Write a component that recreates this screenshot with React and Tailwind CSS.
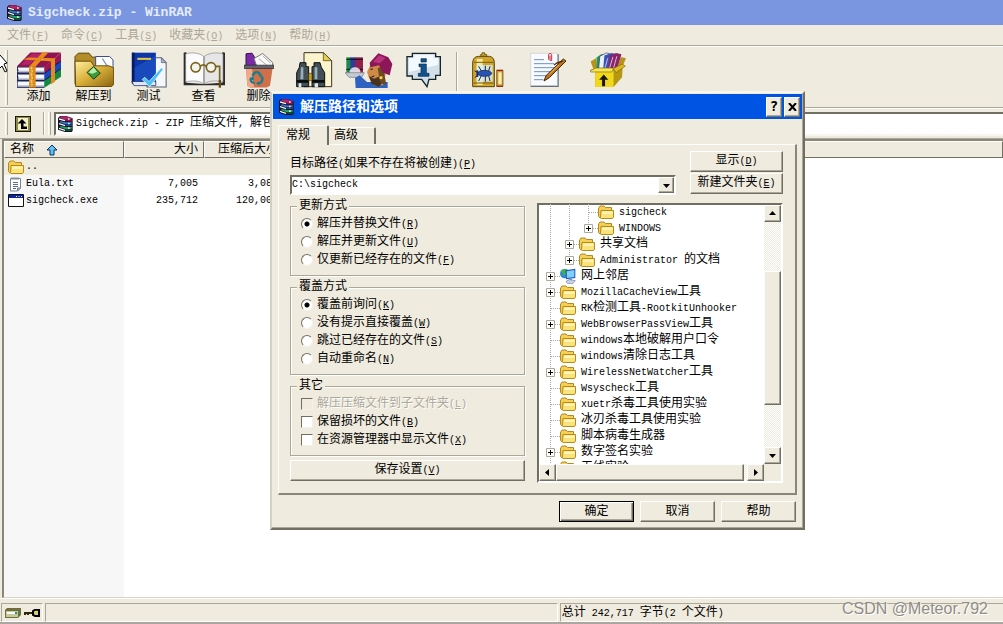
import React from 'react';

const menus = [
    { text: '文件', accel: 'F' },
    { text: '命令', accel: 'C' },
    { text: '工具', accel: 'S' },
    { text: '收藏夹', accel: 'O' },
    { text: '选项', accel: 'N' },
    { text: '帮助', accel: 'H' },
];

const files = [
    { name: '..', icon: 'folder', size: '', packed: '' },
    { name: 'Eula.txt', icon: 'text', size: '7,005', packed: '3,081' },
    { name: 'sigcheck.exe', icon: 'exe', size: '235,712', packed: '120,009' },
];

// lines: one entry per indent level (v = line through, t = branch, + = expander, e = last expander)
const tree = [
    { text: 'sigcheck', lines: ['v', 'v', 't'] },
    { text: 'WINDOWS', lines: ['v', 'v', 'e'] },
    { text: '共享文档', lines: ['v', '+'] },
    { text: 'Administrator 的文档', lines: ['v', 'e'] },
    { text: '网上邻居', lines: ['+'], icon: 'network' },
    { text: 'MozillaCacheView工具', lines: ['+'] },
    { text: 'RK检测工具-RootkitUnhooker', lines: ['t'] },
    { text: 'WebBrowserPassView工具', lines: ['+'] },
    { text: 'windows本地破解用户口令', lines: ['t'] },
    { text: 'windows清除日志工具', lines: ['t'] },
    { text: 'WirelessNetWatcher工具', lines: ['+'] },
    { text: 'Wsyscheck工具', lines: ['t'] },
    { text: 'xuetr杀毒工具使用实验', lines: ['t'] },
    { text: '冰刃杀毒工具使用实验', lines: ['t'] },
    { text: '脚本病毒生成器', lines: ['t'] },
    { text: '数字签名实验', lines: ['+'] },
    { text: '无线实验', lines: ['t'] },
];

const raised = 'border border-t-white border-l-white border-r-[#716f64] border-b-[#716f64] bg-[#efebde] shadow-[inset_-1px_-1px_0_#aca899]';

// Half-width characters take half the width of a Chinese character
function Txt({ text, accel }) {
    return (
        <span className="whitespace-pre">
            {text.split(/([\x20-\x7e]+)/).filter(Boolean).map((part, i) => (
                /^[\x20-\x7e]/.test(part)
                    ? <span key={i} className="text-[10px]">{part}</span>
                    : <span key={i}>{part}</span>
            ))}
            {accel && <span className="text-[10px]">(<u>{accel}</u>)</span>}
        </span>
    );
}

function BooksSmall() {
    return (
        <svg className="h-4 w-4 shrink-0" viewBox="0 0 48 48" aria-hidden="true">
            <path d="M3 6 L9 0 H28 L47 7 V44 L44 48 H24 L3 41 Z" fill="#1a1220" />
            <path d="M7 5 L12 1 H27 L45 7 L42 11 H24 Z" fill="#b0246c" />
            <path d="M6 7 L24 12 V16 L6 11 Z" fill="#fff" />
            <path d="M25 12 H45 V16 H25 Z" fill="#8c1450" />
            <path d="M7 19 L12 16 L26 19 H45 L43 25 H24 Z" fill="#2c78d4" />
            <path d="M6 21 L24 27 V31 L6 25 Z" fill="#fff" />
            <path d="M25 26 H45 V30 H25 Z" fill="#164c9c" />
            <path d="M7 33 L12 30 L26 33 H45 L43 39 H24 Z" fill="#20a070" />
            <path d="M6 35 L24 41 V45 L6 39 Z" fill="#fff" />
            <path d="M25 40 H44 V44 H25 Z" fill="#0c6a3c" />
            <path d="M33 7 H38 V11 H33 Z M33 20 H38 V25 H33 Z M33 34 H38 V39 H33 Z" fill="#f4e8c0" />
        </svg>
    );
}

function Folder() {
    return (
        <svg className="h-4 w-4 shrink-0" viewBox="0 0 16 16" aria-hidden="true">
            <path d="M1 3.5 L2 2 H6 L7.5 3.5 H13.5 V14 H2 L.5 12.5 V4 Z" fill="#f3cf55" stroke="#b58a1b" />
            <path d="M3 6.5 H15.5 V13 L14.5 14.5 H3.5 L2.5 13.5 Z" fill="#fbe37c" stroke="#b58a1b" />
            <path d="M4 7.5 H14.5 V10 H4 Z" fill="#fff3b4" />
        </svg>
    );
}

function Network() {
    return (
        <svg className="h-4 w-4 shrink-0" viewBox="0 0 48 48" aria-hidden="true">
            <circle cx="14" cy="17" r="14" fill="#2f86d8" />
            <path d="M3 10 C8 2 18 1 24 6 L18 12 L20 20 L12 24 L8 16 Z" fill="#3fb548" />
            <path d="M16 7 L46 2 V30 L18 34 Z" fill="#2156c4" />
            <path d="M20 10 L43 6 V27 L21 30 Z" fill="#7fd0fb" />
            <path d="M26 34 L36 32 V38 H26 Z" fill="#8e96b8" />
            <path d="M18 40 L28 35 L46 38 L38 47 L22 46 Z" fill="#cdd3e6" stroke="#7480a8" strokeWidth="2" />
        </svg>
    );
}

function FileIcon({ type }) {
    if (type === 'folder') return <Folder />;
    if (type === 'text') {
        return (
            <svg className="h-4 w-4 shrink-0" viewBox="0 0 16 16" aria-hidden="true">
                <path d="M2.5 2.5 H12.5 V12 L9.5 15 H2.5 Z" fill="#fff" stroke="#7d8494" />
                <path d="M4 1 V4 M6 1 V4 M8 1 V4 M10 1 V4" stroke="#8a93a8" />
                <path d="M5 6.5 H10 M5 8.5 H10 M5 10.5 H10 M5 12.5 H8" stroke="#5a6a94" />
                <path d="M9.5 15 V12 H12.5 Z" fill="#bcc4d6" stroke="#7d8494" />
            </svg>
        );
    }
    return (
        <svg className="h-4 w-4 shrink-0" viewBox="0 0 16 16" aria-hidden="true">
            <path d="M.5 1.5 H15.5 V13.5 H.5 Z" fill="#fff" stroke="#111" />
            <path d="M1 2 H15 V5 H1 Z" fill="#0a22a8" />
            <path d="M8 3.5 H9 M10.5 3.5 H11.5 M13 3.5 H14" stroke="#fff" />
        </svg>
    );
}

function AddIcon() {
    return (
        <svg className="h-9 w-11" viewBox="48 158 132 107" aria-hidden="true">
            <path d="M48 200 H130 V265 H48 Z" fill="#1b2350" />
            <path d="M48 200 L88 159 H180 L132 202 H48 Z" fill="#8f1450" />
            <path d="M60 196 L92 163 H120 L85 196 Z" fill="#b52468" />
            <path d="M50 204 H130 V218 H54 Z M50 225 H130 V240 H54 Z M50 246 H130 V261 H50 Z" fill="#f6f7fb" />
            <path d="M50 214 H130 V218 H50 Z M50 236 H130 V240 H50 Z M50 257 H130 V261 H50 Z" fill="#b4bcd2" />
            <path d="M130 202 L180 160 V184 L130 222 Z" fill="#9c1656" />
            <path d="M130 222 L180 184 V207 L130 243 Z" fill="#1a48c4" />
            <path d="M130 243 L180 207 V232 L130 265 Z" fill="#128a44" />
            <path d="M130 222 L180 184 M130 243 L180 207" stroke="#0c1238" strokeWidth="3" />
            <path d="M124 159 H142 L104 201 H84 Z M66 180 L82 174 L164 176 L158 186 Z" fill="#e88a1c" />
            <path d="M84 200 H104 V264 H84 Z M150 186 L162 176 V247 L150 254 Z" fill="#e48a1e" />
            <path d="M89 202 H94 V262 H89 Z" fill="#ffc660" />
            <path d="M90 211 h7 v7 h-7 Z M90 232 h7 v7 h-7 Z M90 252 h7 v7 h-7 Z M120 177 h8 v5 h-8 Z" fill="#ffe34a" stroke="#7a4204" />
        </svg>
    );
}

function ExtractIcon() {
    return (
        <svg className="h-9 w-10" viewBox="225 160 120 105" aria-hidden="true">
            <defs>
                <linearGradient id="gold" x1="0" y1="0" x2="1" y2="1">
                    <stop offset="0" stopColor="#fff0a0" />
                    <stop offset=".5" stopColor="#d8ae38" />
                    <stop offset="1" stopColor="#8a6410" />
                </linearGradient>
            </defs>
            <path d="M228 172 L238 162 H270 L280 174 H300 V255 H228 Z" fill="#b48c28" stroke="#5c430a" strokeWidth="3" />
            <path d="M290 172 H332 L342 182 V225 H290 Z" fill="#fff" stroke="#38508c" strokeWidth="3" />
            <path d="M310 178 L328 206 H318 V220" fill="none" stroke="#7b94c8" strokeWidth="4" />
            <path d="M228 186 H275 L285 200 H330 L344 206 V256 L338 262 H230 Z" fill="url(#gold)" stroke="#6b4d0c" strokeWidth="3" />
            <path d="M284 202 L304 222 L284 240 L264 220 Z" fill="#3f9b3c" stroke="#143c12" strokeWidth="3" />
            <path d="M284 204 L294 218 L280 224 L268 220 Z" fill="#b7efaa" />
        </svg>
    );
}

function TestIcon() {
    return (
        <svg className="h-9 w-9" viewBox="394 160 104 105" aria-hidden="true">
            <path d="M440 177 H482 L496 191 V262 H440 Z" fill="#f4f6fb" stroke="#5b6172" strokeWidth="3" />
            <path d="M482 177 V191 H496 Z" fill="#aab4cc" stroke="#5b6172" strokeWidth="2" />
            <path d="M396 162 H466 V252 H396 Z" fill="#0c36a8" />
            <path d="M396 162 H404 V252 H396 Z" fill="#041c64" />
            <path d="M404 206 L466 170 V252 H404 Z" fill="#2258cc" opacity=".6" />
            <path d="M396 246 H466 V258 H402 Z" fill="#dfe6f4" stroke="#041c64" strokeWidth="2" />
            <path d="M412 180 H452" stroke="#e8c63c" strokeWidth="6" />
            <path d="M426 240 L434 234 L446 246 L482 206 L488 210 L448 262 Z" fill="#48c0f8" stroke="#fff" strokeWidth="2" />
        </svg>
    );
}

function ViewIcon() {
    return (
        <svg className="h-9 w-[42px]" viewBox="550 160 126 108" aria-hidden="true">
            <path d="M552 162 L560 160 V252 L612 256 L668 252 V160 L676 162 V260 H552 Z" fill="#2b2b30" />
            <path d="M558 166 C575 160 600 162 613 174 V256 C596 244 574 246 558 250 Z" fill="#fbfbfb" stroke="#888" strokeWidth="2" />
            <path d="M670 166 C652 160 626 162 613 174 V256 C630 244 652 246 670 250 Z" fill="#e6e6e6" stroke="#888" strokeWidth="2" />
            <path d="M613 174 V256" stroke="#999" strokeWidth="4" />
            <circle cx="588" cy="206" r="14" fill="#f4f4ee" stroke="#7a641c" strokeWidth="5" />
            <circle cx="634" cy="206" r="14" fill="#f4f4ee" stroke="#7a641c" strokeWidth="5" />
            <path d="M602 203 Q611 194 620 203 M648 203 H660 V250" fill="none" stroke="#7a641c" strokeWidth="5" />
            <path d="M657 244 H664 V267 H657 Z" fill="#6a4d12" />
        </svg>
    );
}

function DeleteIcon() {
    return (
        <svg className="h-9 w-[30px]" viewBox="732 160 90 105" aria-hidden="true">
            <path d="M738 164 L756 162 L782 204 H738 Z" fill="#7c2aa8" stroke="#34104c" strokeWidth="3" />
            <path d="M762 178 L788 163 L818 190 V206 H772 Z" fill="#fbfbfb" stroke="#777" strokeWidth="3" />
            <path d="M776 178 L800 198 M788 170 L812 192" stroke="#aaa" strokeWidth="3" />
            <path d="M738 206 H818 L810 260 L800 265 H750 L742 260 Z" fill="#d0704a" />
            <path d="M738 206 H756 L762 265 H750 L742 260 Z" fill="#f0a888" />
            <path d="M732 198 H822 V208 H732 Z" fill="#62636c" stroke="#26262c" strokeWidth="2" />
            <path d="M758 230 C762 216 776 216 780 226 M786 232 C790 246 782 254 774 252 M764 252 C752 250 750 242 754 236" fill="none" stroke="#157f8c" strokeWidth="7" />
            <path d="M774 226 H788 L782 236 Z M778 246 V260 L768 252 Z M748 240 L760 230 L762 244 Z" fill="#157f8c" />
        </svg>
    );
}

function FindIcon() {
    return (
        <svg className="h-9 w-[38px]" viewBox="872 158 112 108" aria-hidden="true">
            <path d="M898 160 H956 L981 184 V262 H898 Z" fill="#fcf4cc" stroke="#3a3520" strokeWidth="3" />
            <path d="M956 160 V184 H981 Z" fill="#e8cf4c" stroke="#3a3520" strokeWidth="2" />
            <path d="M886 190 H904 V202 H912 V262 H876 V220 L884 204 Z" fill="#425056" stroke="#0c1214" strokeWidth="3" />
            <path d="M928 190 H946 L950 204 L960 220 V262 H922 V202 H928 Z" fill="#425056" stroke="#0c1214" strokeWidth="3" />
            <path d="M889 204 H896 V240 H887 Z M930 204 H938 V240 H930 Z" fill="#98b0b8" />
            <path d="M876 242 H912 V250 H876 Z M922 242 H960 V250 H922 Z" fill="#0a0d0e" />
            <path d="M882 252 H890 V264 H882 Z M930 252 H940 V264 H930 Z" fill="#dfe8ea" />
            <path d="M912 222 H922 V244 H912 Z" fill="#c9a42c" stroke="#4a3a08" strokeWidth="2" />
        </svg>
    );
}

function WizardIcon() {
    return (
        <svg className="h-9 w-12" viewBox="46 22 144 108" aria-hidden="true">
            <path d="M50 38 H64 V84 H50 Z" fill="#1c8a4c" />
            <path d="M62 38 H78 V84 H62 Z" fill="#28409c" />
            <path d="M76 38 H100 V84 H76 Z" fill="#92204c" />
            <path d="M50 44 H100 M50 74 H100" stroke="#101018" strokeWidth="3" />
            <ellipse cx="76" cy="80" rx="16" ry="12" fill="#fff" opacity=".8" />
            <path d="M46 84 H104 L96 98 H58 Z" fill="#c5cad2" stroke="#70767e" strokeWidth="2" />
            <path d="M78 130 L76 100 L90 92 L112 112 H174 V130 Z" fill="#2d62c0" />
            <path d="M122 62 L154 60 L168 88 L160 122 H132 L118 100 L112 82 Z" fill="#cf8a48" />
            <path d="M118 94 L134 102 L156 92 L160 112 L148 126 L126 118 Z" fill="#48331c" />
            <path d="M144 70 L160 66 L170 120 L152 116 Z" fill="#6a4a20" />
            <path d="M120 54 L146 26 L176 38 L188 58 L180 92 L160 84 L148 62 L122 68 Z" fill="#8c1658" />
            <path d="M130 52 L148 32 L168 40 L150 56 Z" fill="#b8347c" />
            <circle cx="154" cy="99" r="5" fill="#f4d03c" />
            <path d="M122 74 L130 73 M126 96 L134 94" stroke="#2a1606" strokeWidth="3" />
        </svg>
    );
}

function InfoIcon() {
    return (
        <svg className="h-9 w-9" viewBox="230 24 106 108" aria-hidden="true">
            <path d="M248 28 H318 V38 H332 V94 H318 V106 H298 L292 128 L276 106 H248 V96 H232 V38 H248 Z" fill="#d3dfe9" stroke="#16242c" strokeWidth="4" />
            <path d="M254 33 H312 V42 H326 V62 L238 84 V42 H254 Z" fill="#f4f9fd" />
            <path d="M274 44 H290 V54 H274 Z M268 60 H290 V88 H298 V97 H266 V88 H274 V68 H268 Z" fill="#0f548c" stroke="#082a4c" strokeWidth="2" />
        </svg>
    );
}

function VirusIcon() {
    return (
        <svg className="h-9 w-8" viewBox="430 24 96 106" aria-hidden="true">
            <path d="M456 30 H460 V25 H468 V30 H474 V38 H456 Z" fill="#c8a02c" stroke="#54400a" strokeWidth="2" />
            <path d="M432 54 Q434 36 450 36 H482 Q496 38 497 54 V127 H432 Z" fill="#d0a52c" stroke="#5c450c" strokeWidth="3" />
            <path d="M444 44 H462 V122 H444 Z" fill="#fdf3b4" opacity=".85" />
            <path d="M435 54 H495 M435 116 H495" stroke="#7a5c10" strokeWidth="3" />
            <path d="M444 62 H492 V112 H444 Z" fill="#d8edf8" opacity=".8" />
            <path d="M450 66 L458 80 M470 64 L470 80 M484 66 L480 80 M450 110 L458 94 M470 112 V94 M484 110 L480 94 M438 80 L450 86 M438 100 L450 90" stroke="#182a5c" strokeWidth="3" />
            <ellipse cx="468" cy="87" rx="21" ry="9" fill="#2754b4" stroke="#101e4c" strokeWidth="2" />
            <path d="M446 78 V98" stroke="#162c74" strokeWidth="6" />
            <path d="M504 78 H523 V126 H504 Z" fill="#cf9a2c" stroke="#5c450c" strokeWidth="2" />
            <path d="M509 84 H519 V120 H509 Z" fill="#f8ecb0" />
            <path d="M504 78 H523 M504 126 H523" stroke="#a02818" strokeWidth="4" />
        </svg>
    );
}

function CommentIcon() {
    return (
        <svg className="h-9 w-9" viewBox="604 24 108 106" aria-hidden="true">
            <path d="M610 30 H690 V128 H606 Z" fill="#5c6470" />
            <path d="M606 27 H686 V124 H606 Z" fill="#f8fafd" stroke="#c4cbd6" strokeWidth="2" />
            <path d="M616 46 H646 M616 58 H676 M616 70 H676 M616 82 H670 M616 94 H660 M616 106 H644" stroke="#6c92c4" strokeWidth="3" />
            <path d="M660 46 V30 Q664 24 669 30 V48 H664 V34" fill="none" stroke="#c8283c" strokeWidth="3" />
            <path d="M704 44 L712 50 L662 100 L646 110 L652 94 Z" fill="#bd7420" stroke="#4c2a06" strokeWidth="3" />
            <path d="M676 62 L684 56 L702 50" fill="none" stroke="#4c2a06" strokeWidth="4" />
            <path d="M690 62 L662 90" stroke="#f0bc68" strokeWidth="3" />
        </svg>
    );
}

function SfxIcon() {
    return (
        <svg className="h-9 w-9" viewBox="782 22 110 108" aria-hidden="true">
            <path d="M802 38 L816 28 L824 28 L812 76 H800 Z" fill="#1f9a58" />
            <path d="M812 34 L832 24 L842 26 L824 76 H808 Z" fill="#eceef8" stroke="#335" strokeWidth="2" />
            <path d="M826 32 L848 24 L858 26 L842 76 H822 Z" fill="#3556b4" />
            <path d="M842 32 L862 24 L878 28 L866 72 H838 Z" fill="#8a2468" />
            <path d="M836 40 L828 70 M852 36 L842 70 M864 34 L854 70" stroke="#d9b8e0" strokeWidth="3" />
            <path d="M784 50 L800 40 L802 72 L792 72 Z M876 36 L892 40 L880 68 L866 66 Z" fill="#b8921c" />
            <path d="M784 74 L852 72 L882 62 L880 98 L854 128 H798 V82 Z" fill="#b59712" />
            <path d="M798 78 H854 V128 H798 Z" fill="#f2d81c" />
            <path d="M782 78 L800 70 H856 L848 82 H784 Z" fill="#f7e554" stroke="#7a6408" strokeWidth="2" />
            <path d="M852 72 L880 58 L890 64 L862 84 Z" fill="#dcba20" stroke="#7a6408" strokeWidth="2" />
            <path d="M824 90 L838 106 H828 V126 H819 V106 H810 Z" fill="#1c1604" />
        </svg>
    );
}

function ToolButton({ icon, label, title, wide }) {
    return (
        <button type="button" aria-label={title} className={`flex h-[54px] shrink-0 flex-col items-center ${wide ? 'w-[60px]' : 'w-[55px]'}`}>
            {icon}
            {label && <span className="leading-[18px]">{label}</span>}
        </button>
    );
}

function Arrow({ d }) {
    return (
        <svg className="h-[7px] w-[7px]" viewBox="0 0 7 7" aria-hidden="true">
            <path d={d} fill="#000" />
        </svg>
    );
}

function Choice({ type, name, text, accel, checked, disabled }) {
    const shape = type === 'radio'
        ? 'rounded-full checked:bg-[radial-gradient(circle,#000_2px,#fff_3px)]'
        : '';
    return (
        <label className={`flex h-[18px] items-center gap-1 ${disabled ? 'text-[#aca899] [text-shadow:1px_1px_0_#fff]' : ''}`}>
            <input
                type={type}
                name={name}
                defaultChecked={checked}
                disabled={disabled}
                className={`h-3 w-3 appearance-none border border-t-[#716f64] border-l-[#716f64] border-r-[#f4f1e8] border-b-[#f4f1e8] bg-white disabled:bg-[#efebde] ${shape}`}
            />
            <Txt text={text} accel={accel} />
        </label>
    );
}

function Group({ title, children }) {
    return (
        <fieldset className="border border-[#aca899] pt-[2px] pb-[6px] pl-[10px] shadow-[1px_1px_0_#fff,inset_1px_1px_0_#fff]">
            <legend className="-ml-1 bg-[#efebde] px-[2px] leading-[14px]">{title}</legend>
            {children}
        </fieldset>
    );
}

function Branch({ kind }) {
    const node = kind === '+' || kind === 'e';
    return (
        <svg className="h-4 w-[19px] shrink-0" viewBox="0 0 19 16" aria-hidden="true">
            <path d={kind === 'e' ? 'M9.5 0 V8' : 'M9.5 0 V16'} stroke="#aca899" strokeDasharray="1 1" />
            {kind !== 'v' && <path d="M10 8.5 H19" stroke="#aca899" strokeDasharray="1 1" />}
            {node && <path d="M5.5 4.5 H13.5 V12.5 H5.5 Z" fill="#fff" stroke="#aca899" />}
            {node && <path d="M7 8.5 H12 M9.5 6 V11" stroke="#000" />}
        </svg>
    );
}

function FolderTree() {
    const track = 'bg-[repeating-conic-gradient(#fff_0_25%,#efebde_0_50%)] bg-[length:2px_2px]';
    return (
        <div className="mt-1 grid h-[280px] flex-1 grid-cols-[minmax(0,1fr)_17px] grid-rows-[minmax(0,1fr)_17px] border-2 border-t-[#716f64] border-l-[#716f64] border-r-white border-b-white bg-white">
            <ul role="tree" className="-mt-px overflow-hidden pl-[2px]">
                {tree.map((node) => (
                    <li key={node.text} role="treeitem" className="flex h-4 items-center">
                        {node.lines.map((kind, i) => <Branch key={i} kind={kind} />)}
                        {node.icon === 'network' ? <Network /> : <Folder />}
                        <span className="pl-[5px] leading-4"><Txt text={node.text} /></span>
                    </li>
                ))}
            </ul>
            <div className={`flex flex-col ${track}`}>
                <button type="button" aria-label="向上" className={`flex h-[17px] items-center justify-center ${raised}`}>
                    <Arrow d="M0 5 L3.5 1 L7 5 Z" />
                </button>
                <div className="h-[49px]" />
                <div className={`h-[134px] ${raised}`} />
                <div className="flex-1" />
                <button type="button" aria-label="向下" className={`flex h-[17px] items-center justify-center ${raised}`}>
                    <Arrow d="M0 2 L3.5 6 L7 2 Z" />
                </button>
            </div>
            <div className={`flex ${track}`}>
                <button type="button" aria-label="向左" className={`flex w-[17px] items-center justify-center ${raised}`}>
                    <Arrow d="M5 0 L1 3.5 L5 7 Z" />
                </button>
                <div className={`mr-[3px] flex-1 ${raised}`} />
                <button type="button" aria-label="向右" className={`flex w-[17px] items-center justify-center ${raised}`}>
                    <Arrow d="M2 0 L6 3.5 L2 7 Z" />
                </button>
            </div>
            <div className="bg-[#efebde]" />
        </div>
    );
}

function ExtractDialog() {
    return (
        <div role="dialog" aria-labelledby="dlg-title" className="absolute top-[91px] left-[270px] w-[535px] border-2 border-t-[#f7f5ee] border-l-[#d4d0c2] border-r-[#716f64] border-b-[#716f64] bg-[#efebde] p-px shadow-[inset_-1px_-1px_0_#aca899]">
            <div className="flex h-[25px] items-center bg-[#0054e3] pr-[2px] pl-[5px] text-white">
                <BooksSmall />
                <h2 id="dlg-title" className="flex-1 pl-[6px] text-[14px] leading-5 font-bold">解压路径和选项</h2>
                <button type="button" aria-label="帮助" className={`flex h-5 w-4 items-center justify-center font-['DejaVu_Sans_Mono'] text-[14px] font-bold text-black ${raised}`}>?</button>
                <button type="button" aria-label="关闭" className={`ml-[2px] flex h-5 w-4 items-center justify-center ${raised}`}>
                    <svg className="h-2 w-[9px]" viewBox="0 0 9 8" aria-hidden="true">
                        <path d="M1 0 L8 8 M8 0 L1 8" stroke="#000" strokeWidth="2" />
                    </svg>
                </button>
            </div>

            <div className="px-[5px] pt-[6px] pb-[5px]">
                <div role="tablist" className="flex h-[19px] items-end">
                    <button type="button" role="tab" aria-selected="true" className="z-10 -mb-px h-5 w-[51px] rounded-t-xs border-t border-r-2 border-l border-t-white border-r-[#716f64] border-l-white bg-[#efebde] pl-[7px] text-left leading-4">常规</button>
                    <button type="button" role="tab" aria-selected="false" className="h-[17px] w-[47px] rounded-t-xs border-t border-r-2 border-t-white border-r-[#716f64] pl-[5px] text-left leading-4">高级</button>
                </div>

                <div className="border-t border-r-2 border-b-2 border-l border-t-white border-r-[#8a877a] border-b-[#8a877a] border-l-white pt-[6px] pr-3 pb-[10px] pl-[11px]">
                    <div className="flex gap-[14px]">
                        <div className="flex-1 pt-1">
                            <label htmlFor="path" className="block leading-[18px]"><Txt text="目标路径(如果不存在将被创建)" accel="P" /></label>
                            <div className="mt-px flex h-5 border-2 border-t-[#716f64] border-l-[#716f64] border-r-white border-b-white bg-white">
                                <select id="path" className="min-w-0 flex-1 appearance-none bg-white text-[10px] leading-4 outline-none">
                                    <option>C:\sigcheck</option>
                                </select>
                                <span className={`flex w-4 items-center justify-center ${raised}`}>
                                    <Arrow d="M0 2 L3.5 6 L7 2 Z" />
                                </span>
                            </div>
                        </div>
                        <div className="flex w-[93px] flex-col gap-px">
                            <button type="button" className={`h-[21px] leading-4 ${raised}`}><Txt text="显示" accel="D" /></button>
                            <button type="button" className={`h-[21px] leading-4 ${raised}`}><Txt text="新建文件夹" accel="E" /></button>
                        </div>
                    </div>

                    <div className="mt-1 flex gap-3">
                        <div className="flex w-[235px] flex-col gap-1">
                            <Group title="更新方式">
                                <Choice type="radio" name="update" text="解压并替换文件" accel="R" checked />
                                <Choice type="radio" name="update" text="解压并更新文件" accel="U" />
                                <Choice type="radio" name="update" text="仅更新已经存在的文件" accel="F" />
                            </Group>
                            <Group title="覆盖方式">
                                <Choice type="radio" name="overwrite" text="覆盖前询问" accel="K" checked />
                                <Choice type="radio" name="overwrite" text="没有提示直接覆盖" accel="W" />
                                <Choice type="radio" name="overwrite" text="跳过已经存在的文件" accel="S" />
                                <Choice type="radio" name="overwrite" text="自动重命名" accel="N" />
                            </Group>
                            <Group title="其它">
                                <Choice type="checkbox" name="subfolder" text="解压压缩文件到子文件夹" accel="L" disabled />
                                <Choice type="checkbox" name="broken" text="保留损坏的文件" accel="B" />
                                <Choice type="checkbox" name="explorer" text="在资源管理器中显示文件" accel="X" />
                            </Group>
                            <button type="button" className={`h-[21px] leading-4 ${raised}`}><Txt text="保存设置" accel="V" /></button>
                        </div>
                        <FolderTree />
                    </div>
                </div>

                <div className="mt-[6px] flex justify-end gap-[6px] pr-px">
                    <button type="button" className="h-[21px] w-[75px] border border-black leading-4 shadow-[inset_1px_1px_0_#fff,inset_-1px_-1px_0_#716f64,inset_-2px_-2px_0_#aca899]">确定</button>
                    <button type="button" className={`h-[21px] w-[75px] leading-4 ${raised}`}>取消</button>
                    <button type="button" className={`h-[21px] w-[75px] leading-4 ${raised}`}>帮助</button>
                </div>
            </div>
        </div>
    );
}

function Grip() {
    return <div className="w-[3px] shrink-0 self-stretch border-r border-l border-r-[#aca899] border-l-white" />;
}

export default function App() {
    const th = 'h-[17px] border border-t-white border-l-white border-r-[#716f64] border-b-[#716f64] bg-[#efebde] p-0 font-normal leading-[14px]';
    return (
        <div className="relative flex min-h-screen flex-col overflow-hidden bg-[#efebde] font-['Liberation_Mono','Noto_Sans_CJK_SC',monospace] text-[12px] text-black">
            <header className="flex h-[25px] items-center bg-[#7b96e1] pl-[6px] text-[#e4ecfb]">
                <BooksSmall />
                <h1 className="pl-[6px] text-[13px] leading-5 font-bold">Sigcheck.zip - WinRAR</h1>
            </header>

            <nav className="flex h-[21px] items-center gap-3 border-b border-[#aca899] pl-[7px] text-[#aca899]">
                {menus.map((m) => (
                    <button key={m.accel} type="button" className="pt-[2px] leading-4"><Txt text={m.text} accel={m.accel} /></button>
                ))}
            </nav>

            <div className="flex h-[62px] border-t border-b border-t-white border-b-[#aca899] pt-[3px] pb-[2px] pl-[5px]">
                <Grip />
                <div className="flex items-start pt-[2px] pl-[3px]">
                    <ToolButton icon={<AddIcon />} label="添加" />
                    <ToolButton icon={<ExtractIcon />} label="解压到" />
                    <ToolButton icon={<TestIcon />} label="测试" />
                    <ToolButton icon={<ViewIcon />} label="查看" />
                    <ToolButton icon={<DeleteIcon />} label="删除" />
                    <ToolButton icon={<FindIcon />} title="查找" />
                    <ToolButton icon={<WizardIcon />} title="向导" />
                    <ToolButton icon={<InfoIcon />} title="信息" />
                    <div className="ml-[5px] h-[54px] w-[2px] border-r border-l border-r-white border-l-[#aca899]" />
                    <ToolButton icon={<VirusIcon />} title="扫描病毒" wide />
                    <ToolButton icon={<CommentIcon />} title="注释" wide />
                    <ToolButton icon={<SfxIcon />} title="自解压格式" wide />
                </div>
            </div>

            <div className="flex h-[31px] items-center border-t border-b border-t-white border-b-[#aca899] py-[3px] pl-[5px]">
                <Grip />
                <button type="button" aria-label="上一级" className="ml-[7px]">
                    <svg className="h-4 w-4" viewBox="0 0 16 16" aria-hidden="true">
                        <path d="M0 0 H16 V16 H0 Z" fill="#1c1a08" />
                        <path d="M1 1 H15 V15 H1 Z" fill="#8c8c48" />
                        <path d="M3 2 H13 V14 H3 Z" fill="#f4f0c8" />
                        <path d="M7 3 L11.5 7.5 H8.5 V10.5 H12 V13 H6 V7.5 H2.5 Z" fill="#000" />
                    </svg>
                </button>
                <div className="mr-[3px] ml-3 w-[2px] self-stretch border-r border-l border-r-white border-l-[#aca899]" />
                <Grip />
                <button type="button" aria-haspopup="listbox" className="ml-[3px] flex h-6 flex-1 items-center border-2 border-r-0 border-t-[#716f64] border-l-[#716f64] border-b-[#f7f5ee] bg-white pl-px text-left">
                    <BooksSmall />
                    <span className="pl-[3px] leading-4"><Txt text="Sigcheck.zip - ZIP 压缩文件, 解包大小为 242,717 字节" /></span>
                </button>
            </div>

            <main className="ml-[2px] flex-1 border-t-2 border-b border-l-2 border-t-[#8a877a] border-b-[#d8d5c8] border-l-[#8a877a] bg-[linear-gradient(90deg,#f7f7f7_120px,#fff_120px)]">
                <table className="w-full table-fixed border-separate border-spacing-0">
                    <thead>
                        <tr>
                            <th className={`w-[120px] text-left ${th}`}>
                                <span className="flex items-center gap-3 pl-[5px]">
                                    名称
                                    <svg className="h-3 w-3" viewBox="0 0 12 12" aria-hidden="true">
                                        <path d="M6 1 L11 6 H8 V11 H4 V6 H1 Z" fill="#5cc4ee" stroke="#0c2c6c" />
                                    </svg>
                                </span>
                            </th>
                            <th className={`w-20 text-right ${th}`}><span className="pr-[5px]">大小</span></th>
                            <th className={`w-20 text-right ${th}`}><span className="pr-[5px]">压缩后大小</span></th>
                            <th className={`w-[300px] ${th}`} />
                            <th className={th} />
                        </tr>
                    </thead>
                    <tbody>
                        {files.map((f) => (
                            <tr key={f.name} className={`h-[17px] leading-[17px] ${f.icon === 'folder' ? 'bg-[#efebde]' : ''}`}>
                                <td className="p-0">
                                    <span className="flex items-center gap-[2px] pl-1">
                                        <FileIcon type={f.icon} />
                                        <Txt text={f.name} />
                                    </span>
                                </td>
                                <td className="p-0 pr-[6px] text-right"><Txt text={f.size} /></td>
                                <td className="p-0 pr-[6px] text-right"><Txt text={f.packed} /></td>
                                <td className="p-0" />
                                <td className="bg-white p-0" />
                            </tr>
                        ))}
                    </tbody>
                </table>
            </main>

            <footer className="flex h-[26px] gap-[2px] border-t border-b-2 border-t-white border-b-[#aca6a0] pt-1 pl-px">
                <div className="flex h-[19px] w-[42px] items-center gap-[3px] border border-t-[#aca899] border-l-[#aca899] border-r-white border-b-white pl-[3px]">
                    <svg className="h-[10px] w-4" viewBox="0 0 16 10" aria-hidden="true">
                        <path d="M2 0 H16 V7 L13 10 H0 V2 Z" fill="#6e6e3c" />
                        <path d="M1 3 H13 V9 H1 Z" fill="#c6c89c" />
                        <path d="M2 5 H12" stroke="#fff" strokeWidth="2" />
                        <path d="M10 5 H12" stroke="#1c9a78" strokeWidth="2" />
                    </svg>
                    <svg className="h-2 w-4" viewBox="0 0 16 8" aria-hidden="true">
                        <path d="M0 4 H10 M1 4 V6 M4 4 V6" stroke="#2c2808" strokeWidth="2" />
                        <path d="M9 2 L11 0.8 H15 V7 H11 L9 6 Z" fill="#d8cf70" stroke="#000" strokeWidth="2" />
                    </svg>
                </div>
                <div className="h-[19px] flex-[514] border border-t-[#aca899] border-l-[#aca899] border-r-white border-b-white" />
                <div className="h-[19px] flex-[444] border border-r-0 border-t-[#aca899] border-l-[#aca899] border-b-white pl-px leading-[18px]">
                    <Txt text="总计 242,717 字节(2 个文件)" />
                </div>
            </footer>

            <ExtractDialog />

            <svg className="absolute top-[54px] left-0 h-5 w-2" viewBox="0 0 8 20" aria-hidden="true">
                <path d="M0 1 L7 9 L4 10 L7 17 L5 18 L2 12 L0 14" fill="#fff" stroke="#000" />
            </svg>
            <span className="absolute right-[15px] bottom-[3px] font-['Liberation_Sans'] text-[16px] leading-6 text-[#8f8d88] [text-shadow:1px_1px_0_#fff]">CSDN @Meteor.792</span>
        </div>
    );
}
